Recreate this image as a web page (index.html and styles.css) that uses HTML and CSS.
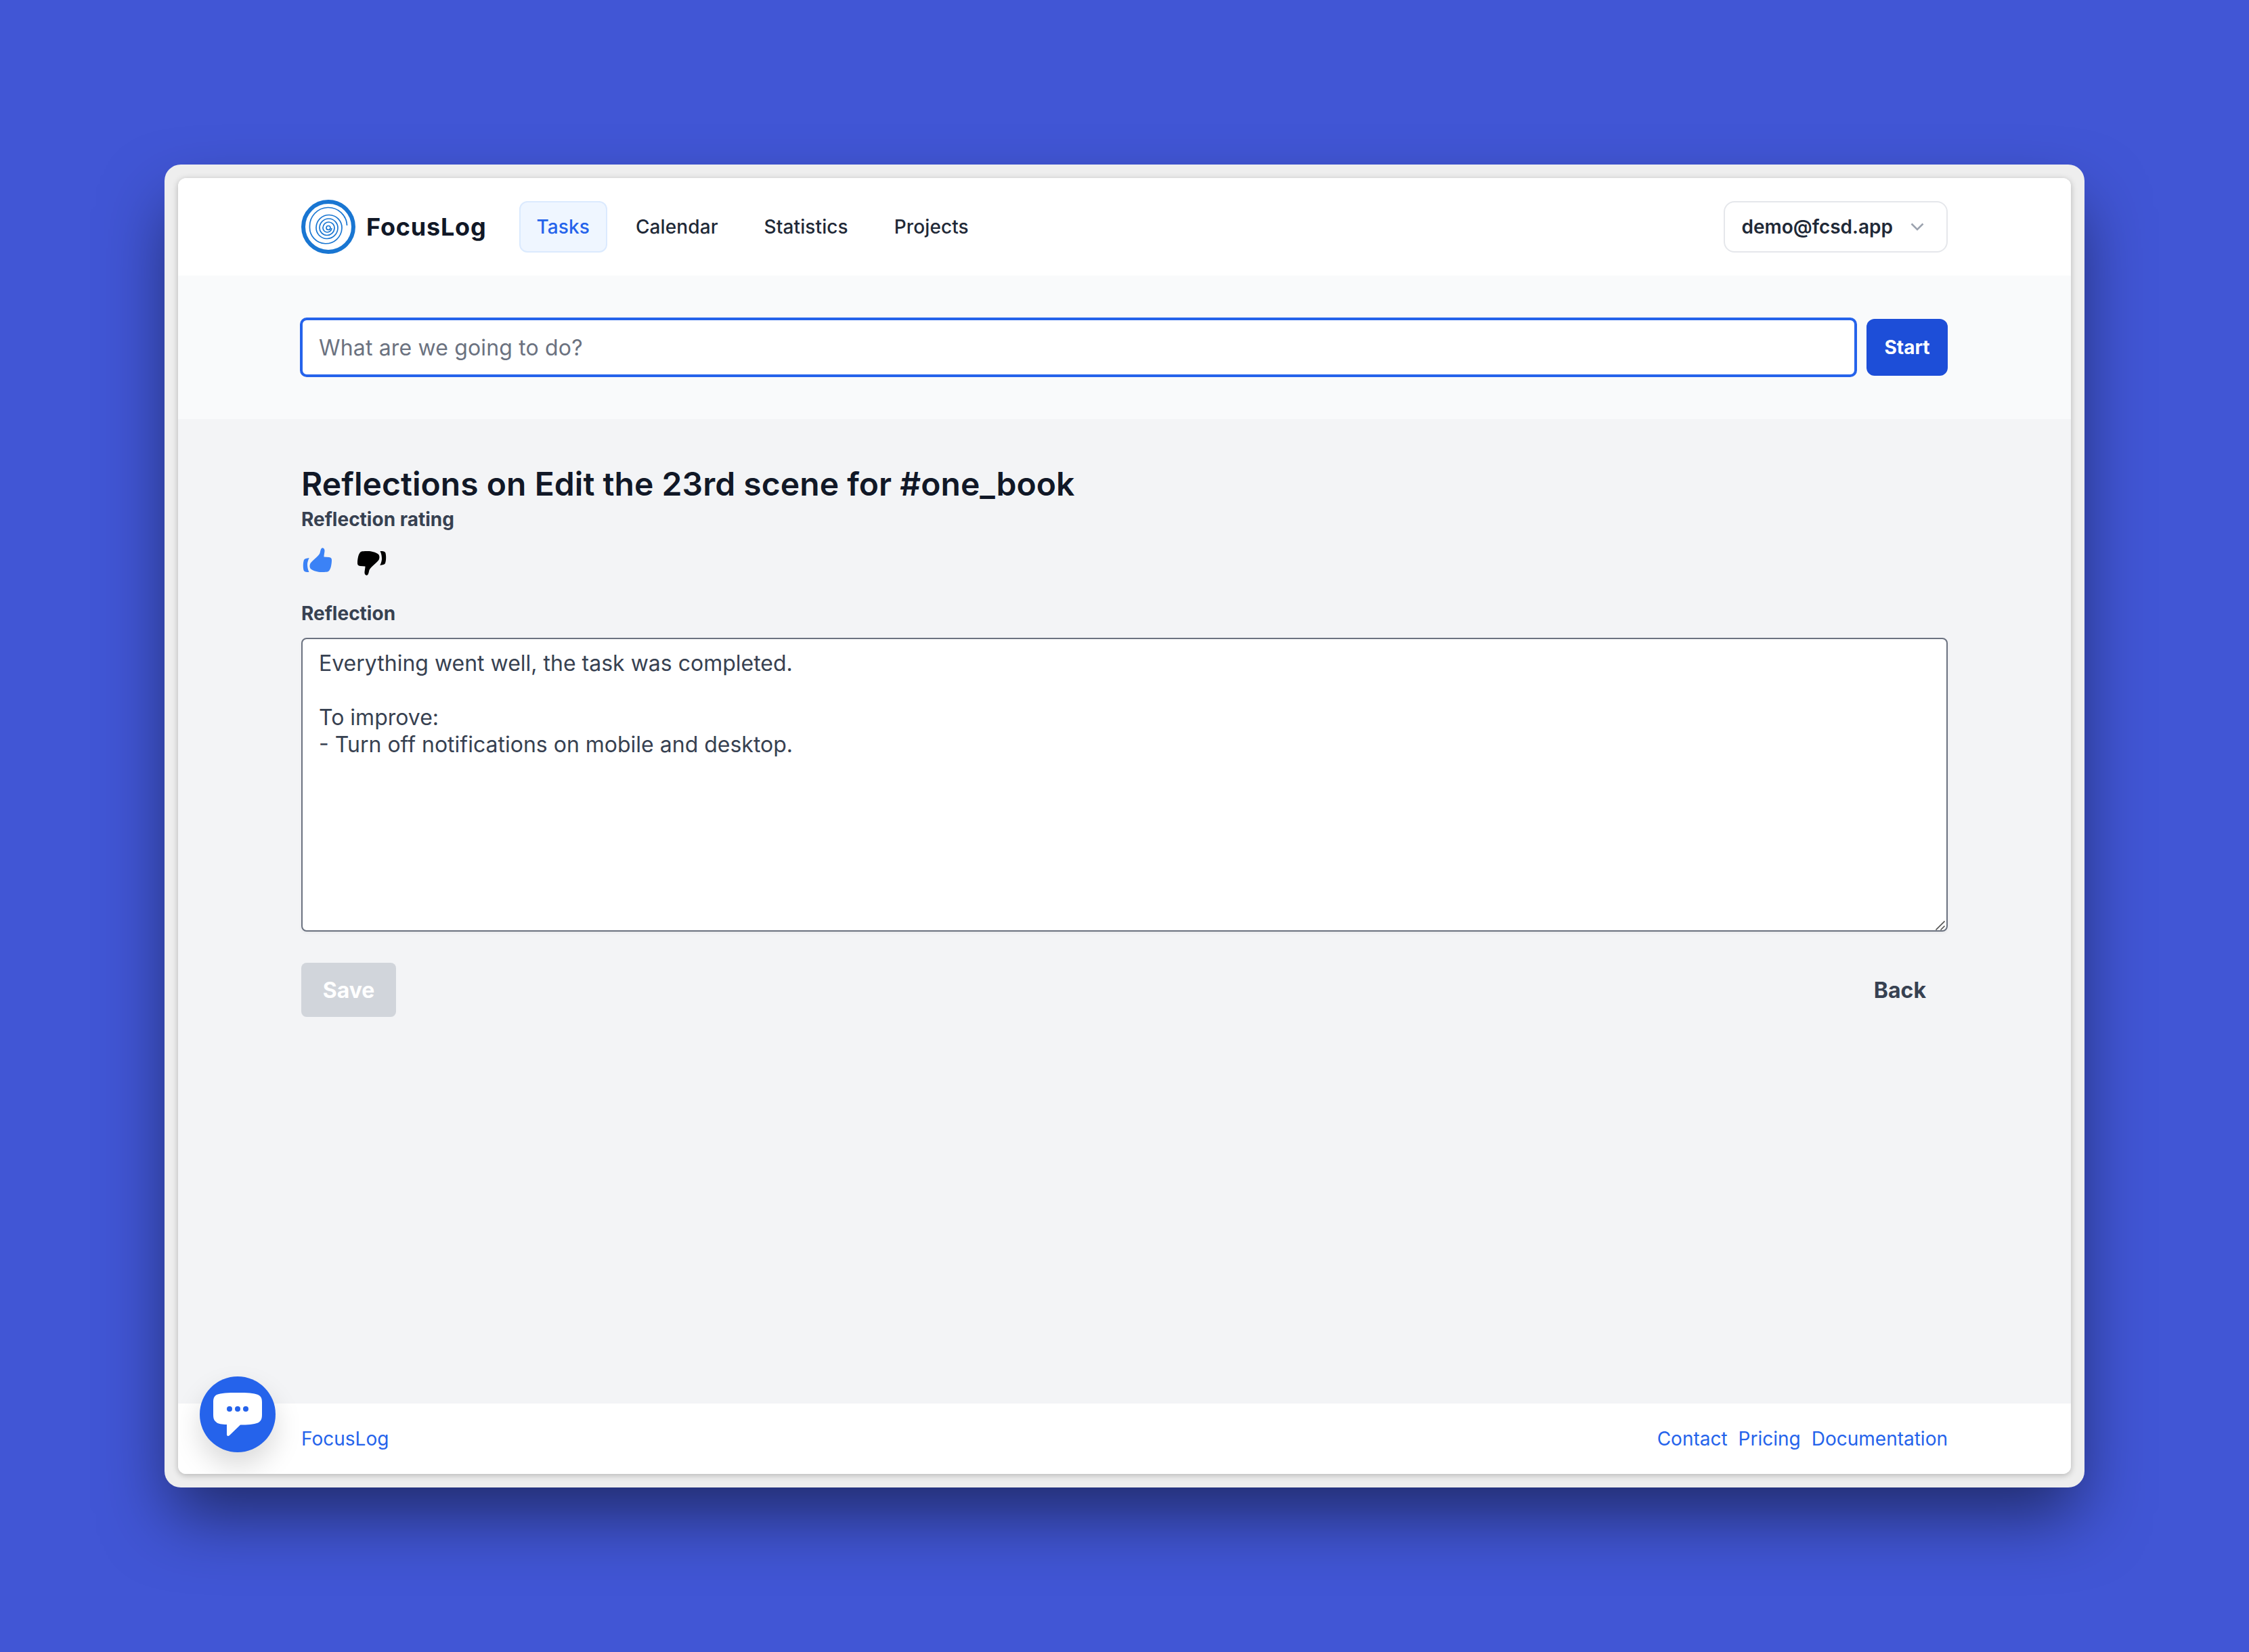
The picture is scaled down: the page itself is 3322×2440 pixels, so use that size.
FILE: index.html
```html
<!DOCTYPE html>
<html>
<head>
    <title>FocusLog</title>
    <link rel="stylesheet" href="styles.css">
</head>
<body>
    <div class="frame">
        <div class="window">
            <header class="topbar">
                <a class="brand" href="#">
                    <svg class="logo" viewBox="0 0 80 80" fill="none" stroke="#1976d2">
                        <circle cx="40" cy="40" r="37" stroke-width="6"/>
                        <path stroke-width="1.7" d="M67.5 38A27.5 27.5 0 0 0 12.5 40A23.75 23.75 0 0 0 60 42A19 19 0 0 0 22 41A16 16 0 0 0 54 42A13.5 13.5 0 0 0 27 41A11 11 0 0 0 49 42A8.5 8.5 0 0 0 32 41A6.5 6.5 0 0 0 45 42"/>
                        <circle cx="40" cy="41.5" r="3" stroke-width="1.7"/>
                    </svg>
                    <span class="brand-name">FocusLog</span>
                </a>
                <nav class="nav">
                    <a class="nav-item active" href="#">Tasks</a>
                    <a class="nav-item" href="#">Calendar</a>
                    <a class="nav-item" href="#">Statistics</a>
                    <a class="nav-item" href="#">Projects</a>
                </nav>
                <button class="account" type="button">
                    demo@fcsd.app
                    <svg class="chevron" viewBox="0 0 20 12" fill="none" stroke="#9ca3af" stroke-width="2.6"><path d="M1.5 1.5L10 10L18.5 1.5"/></svg>
                </button>
            </header>

            <section class="quick-add">
                <input class="task-input" type="text" placeholder="What are we going to do?">
                <button class="start-btn" type="button">Start</button>
            </section>

            <main class="content">
                <h1>Reflections on Edit the 23rd scene for #one_book</h1>
                <div class="field-label">Reflection rating</div>
                <div class="rating">
                    <svg class="thumb up" viewBox="0 0 48 48">
                        <path d="M13.5 28C17 23 24 19 27 14C28.5 11.5 28 7 30.5 5.5C33 4.5 34.8 7 34.5 10C34.2 13 33.5 16 33.5 18.5L41 19C44 19.2 45.3 21 45 24C44.8 29 44 35 41.5 38.5C40 41 36 41 30 41C24 41 18 39 15 37C12 35 12 31 13.5 28Z"/>
                        <path d="M11.8 20C8 20.5 5 21 4 23C2.5 27 2.5 34 3.5 38C4 40.5 7 41 11.5 41C9.5 37 9 33 9 29C9.3 26 10.5 22 11.8 20Z"/>
                    </svg>
                    <svg class="thumb down" viewBox="0 0 48 48">
                        <g transform="rotate(180 24 25.5)">
                            <path d="M13.5 28C17 23 24 19 27 14C28.5 11.5 28 7 30.5 5.5C33 4.5 34.8 7 34.5 10C34.2 13 33.5 16 33.5 18.5L41 19C44 19.2 45.3 21 45 24C44.8 29 44 35 41.5 38.5C40 41 36 41 30 41C24 41 18 39 15 37C12 35 12 31 13.5 28Z"/>
                            <path d="M11.8 20C8 20.5 5 21 4 23C2.5 27 2.5 34 3.5 38C4 40.5 7 41 11.5 41C9.5 37 9 33 9 29C9.3 26 10.5 22 11.8 20Z"/>
                        </g>
                    </svg>
                </div>
                <label class="field-label" for="reflection">Reflection</label>
                <div class="reflection-wrap">
                    <textarea class="reflection" id="reflection">Everything went well, the task was completed.

To improve:
- Turn off notifications on mobile and desktop.</textarea>
                    <svg class="resize-grip" viewBox="0 0 14 14" stroke="#555" stroke-width="1.6" fill="none"><path d="M0.5 13.5L13.5 0.5M7.5 13.5L13.5 7.5"/></svg>
                </div>
                <div class="actions">
                    <button class="save-btn" type="button">Save</button>
                    <a class="back-btn" href="#">Back</a>
                </div>
            </main>

            <footer class="footer">
                <a href="#">FocusLog</a>
                <div class="footer-links">
                    <a href="#">Contact</a>
                    <a href="#">Pricing</a>
                    <a href="#">Documentation</a>
                </div>
            </footer>

            <button class="chat" type="button" aria-label="Chat">
                <svg viewBox="0 0 112 112">
                    <path fill="#fff" d="M56 24C70 24 80 24.5 86 27C91 29.5 92 33 92 38V56C92 62 91 66 86 68.5C80 71 70 71.5 60 71.5L44 87C42 89 40 88 40 85.5V71C33 71 27 70 25 68C21 65 20 62 20 56V38C20 33 21 29.5 25 27C31 24.5 42 24 56 24Z"/>
                    <circle cx="44" cy="48" r="4" fill="#2563eb"/>
                    <circle cx="56" cy="48" r="4" fill="#2563eb"/>
                    <circle cx="68" cy="48" r="4" fill="#2563eb"/>
                </svg>
            </button>
        </div>
    </div>
</body>
</html>
```

FILE: styles.css
```css
* { box-sizing: border-box; }
html, body { height: 100%; }
body { margin: 0; padding: 243px; display: flex; background: #4156d5; font-family: Inter, "Liberation Sans", sans-serif; color: #111827; }
a { text-decoration: none; color: inherit; }
button { font-family: inherit; border: none; padding: 0; cursor: pointer; }

.frame { flex: 1; display: flex; padding: 20px; background: #eeeeee; border-radius: 24px; box-shadow: 0 50px 100px -10px rgba(0,0,0,0.5); }
.window { flex: 1; position: relative; display: flex; flex-direction: column; overflow: hidden; background: #f3f4f6; border-radius: 12px; box-shadow: 0 2px 10px rgba(0,0,0,0.25); }

.topbar { height: 144px; padding: 0 182px; display: flex; align-items: center; background: #fff; }
.brand { display: flex; align-items: center; gap: 16px; }
.logo { width: 80px; height: 80px; }
.brand-name { font-size: 36px; font-weight: 700; letter-spacing: 0.8px; color: #111827; }
.nav { display: flex; gap: 16px; margin-left: 48px; }
.nav-item { height: 76px; padding: 0 24px; display: flex; align-items: center; font-size: 28px; font-weight: 500; letter-spacing: 0.1px; color: #1f2937; border: 2px solid transparent; border-radius: 12px; }
.nav-item.active { color: #2563eb; background: #eff6ff; border-color: #dbeafe; }
.account { margin-left: auto; height: 76px; padding: 0 33px 0 24px; display: flex; align-items: center; gap: 26px; font-size: 28px; font-weight: 600; color: #1f2937; background: #fff; border: 2px solid #e5e7eb; border-radius: 16px; }
.chevron { width: 20px; height: 12px; }

.quick-add { padding: 64px 182px; display: flex; gap: 16px; background: #f9fafb; }
.task-input { flex: 1; height: 84px; padding: 0 24px; font-family: inherit; font-size: 32px; letter-spacing: 0.16px; color: #111827; background: #fff; border: 2px solid #2563eb; border-radius: 8px; box-shadow: 0 0 0 2px #2563eb; outline: none; }
.task-input::placeholder { color: #6b7280; opacity: 1; }
.start-btn { width: 120px; height: 84px; font-size: 28px; font-weight: 700; color: #fff; background: #1d4ed8; border-radius: 12px; }

.content { flex: 1; padding: 64px 182px 0; display: flex; flex-direction: column; }
h1 { margin: 0; font-size: 48px; line-height: 64px; font-weight: 600; letter-spacing: 0.05px; color: #111827; }
.field-label { display: block; font-size: 28px; line-height: 40px; font-weight: 700; color: #374151; }
.rating { display: flex; gap: 32px; margin: 17px 0 34px; }
.thumb { width: 48px; height: 48px; }
.thumb.up { fill: #3b82f6; }
.thumb.down { fill: #000; }
.reflection-wrap { position: relative; margin-top: 16px; }
.reflection { display: block; width: 100%; height: 434px; padding: 16px 24px; font-family: inherit; font-size: 32px; line-height: 40px; color: #374151; background: #fff; border: 2px solid #6b7280; border-radius: 8px; box-shadow: 0 2px 4px rgba(0,0,0,0.05); outline: none; resize: none; }
.resize-grip { position: absolute; right: 4px; bottom: 2px; width: 14px; height: 14px; }
.actions { margin-top: 46px; display: flex; justify-content: space-between; align-items: center; }
.save-btn { width: 140px; height: 80px; font-size: 32px; font-weight: 700; color: #fff; background: #d1d5db; border-radius: 8px; }
.back-btn { padding: 0 32px; font-size: 32px; font-weight: 700; color: #374151; }

.footer { height: 104px; padding: 0 182px; display: flex; justify-content: space-between; align-items: center; font-size: 28px; color: #2563eb; background: #fff; }
.footer-links { display: flex; gap: 16px; }

.chat { position: absolute; left: 32px; bottom: 32px; width: 112px; height: 112px; background: #2563eb; border-radius: 50%; box-shadow: 0 20px 40px rgba(0,0,0,0.15); }
.chat svg { display: block; width: 112px; height: 112px; }
```
